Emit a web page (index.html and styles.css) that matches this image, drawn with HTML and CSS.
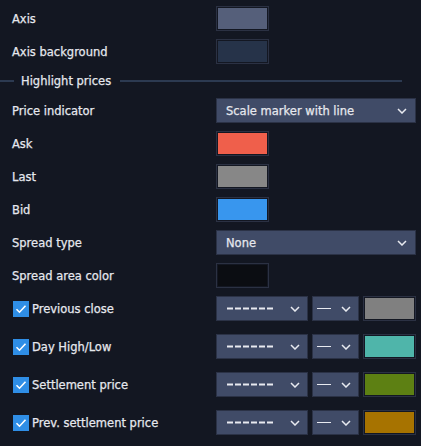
FILE: index.html
```html
<!DOCTYPE html>
<html>
<head>
<meta charset="utf-8">
<link rel="stylesheet" href="styles.css">
</head>
<body>
<div class="panel">
  <div class="row"><span class="label">Axis</span><span class="swatch"><i class="fill c-axis"></i></span></div>
  <div class="row"><span class="label">Axis background</span><span class="swatch"><i class="fill c-axisbg"></i></span></div>
  <div class="section"><span class="line short"></span><span class="section-title">Highlight prices</span><span class="line long"></span></div>
  <div class="row"><span class="label">Price indicator</span>
    <div class="select wide"><span class="select-text">Scale marker with line</span>
      <svg class="chev" width="10" height="6" viewBox="0 0 10 6"><path d="M1 1l4 4 4-4" fill="none" stroke="#e8eaf0" stroke-width="1.5"/></svg></div></div>
  <div class="row"><span class="label">Ask</span><span class="swatch"><i class="fill c-ask"></i></span></div>
  <div class="row"><span class="label">Last</span><span class="swatch"><i class="fill c-last"></i></span></div>
  <div class="row"><span class="label">Bid</span><span class="swatch"><i class="fill c-bid"></i></span></div>
  <div class="row"><span class="label">Spread type</span>
    <div class="select wide"><span class="select-text">None</span>
      <svg class="chev" width="10" height="6" viewBox="0 0 10 6"><path d="M1 1l4 4 4-4" fill="none" stroke="#e8eaf0" stroke-width="1.5"/></svg></div></div>
  <div class="row"><span class="label">Spread area color</span><span class="swatch"><i class="fill c-spread"></i></span></div>

  <div class="row"><span class="label check-label"><span class="checkbox"><svg width="16" height="16" viewBox="0 0 16 16"><path d="M3.5 8.2l3 3 6-6.5" fill="none" stroke="#fff" stroke-width="1.6"/></svg></span>Previous close</span>
    <div class="controls">
      <div class="select dash"><svg width="46" height="3" viewBox="0 0 46 3"><path d="M0 1.5h46" stroke="#e8eaf0" stroke-width="2" stroke-dasharray="6 2"/></svg><svg class="chev" width="10" height="6" viewBox="0 0 10 6"><path d="M1 1l4 4 4-4" fill="none" stroke="#e8eaf0" stroke-width="1.5"/></svg></div>
      <div class="select width"><svg width="14" height="3" viewBox="0 0 14 3"><path d="M0 1.5h14" stroke="#e8eaf0" stroke-width="1"/></svg><svg class="chev" width="10" height="6" viewBox="0 0 10 6"><path d="M1 1l4 4 4-4" fill="none" stroke="#e8eaf0" stroke-width="1.5"/></svg></div>
      <span class="swatch"><i class="fill c-prev"></i></span>
    </div></div>

  <div class="row gap"><span class="label check-label"><span class="checkbox"><svg width="16" height="16" viewBox="0 0 16 16"><path d="M3.5 8.2l3 3 6-6.5" fill="none" stroke="#fff" stroke-width="1.6"/></svg></span>Day High/Low</span>
    <div class="controls">
      <div class="select dash"><svg width="46" height="3" viewBox="0 0 46 3"><path d="M0 1.5h46" stroke="#e8eaf0" stroke-width="2" stroke-dasharray="6 2"/></svg><svg class="chev" width="10" height="6" viewBox="0 0 10 6"><path d="M1 1l4 4 4-4" fill="none" stroke="#e8eaf0" stroke-width="1.5"/></svg></div>
      <div class="select width"><svg width="14" height="3" viewBox="0 0 14 3"><path d="M0 1.5h14" stroke="#e8eaf0" stroke-width="1"/></svg><svg class="chev" width="10" height="6" viewBox="0 0 10 6"><path d="M1 1l4 4 4-4" fill="none" stroke="#e8eaf0" stroke-width="1.5"/></svg></div>
      <span class="swatch"><i class="fill c-day"></i></span>
    </div></div>

  <div class="row gap"><span class="label check-label"><span class="checkbox"><svg width="16" height="16" viewBox="0 0 16 16"><path d="M3.5 8.2l3 3 6-6.5" fill="none" stroke="#fff" stroke-width="1.6"/></svg></span>Settlement price</span>
    <div class="controls">
      <div class="select dash"><svg width="46" height="3" viewBox="0 0 46 3"><path d="M0 1.5h46" stroke="#e8eaf0" stroke-width="2" stroke-dasharray="6 2"/></svg><svg class="chev" width="10" height="6" viewBox="0 0 10 6"><path d="M1 1l4 4 4-4" fill="none" stroke="#e8eaf0" stroke-width="1.5"/></svg></div>
      <div class="select width"><svg width="14" height="3" viewBox="0 0 14 3"><path d="M0 1.5h14" stroke="#e8eaf0" stroke-width="1"/></svg><svg class="chev" width="10" height="6" viewBox="0 0 10 6"><path d="M1 1l4 4 4-4" fill="none" stroke="#e8eaf0" stroke-width="1.5"/></svg></div>
      <span class="swatch"><i class="fill c-settle"></i></span>
    </div></div>

  <div class="row gap"><span class="label check-label"><span class="checkbox"><svg width="16" height="16" viewBox="0 0 16 16"><path d="M3.5 8.2l3 3 6-6.5" fill="none" stroke="#fff" stroke-width="1.6"/></svg></span>Prev. settlement price</span>
    <div class="controls">
      <div class="select dash"><svg width="46" height="3" viewBox="0 0 46 3"><path d="M0 1.5h46" stroke="#e8eaf0" stroke-width="2" stroke-dasharray="6 2"/></svg><svg class="chev" width="10" height="6" viewBox="0 0 10 6"><path d="M1 1l4 4 4-4" fill="none" stroke="#e8eaf0" stroke-width="1.5"/></svg></div>
      <div class="select width"><svg width="14" height="3" viewBox="0 0 14 3"><path d="M0 1.5h14" stroke="#e8eaf0" stroke-width="1"/></svg><svg class="chev" width="10" height="6" viewBox="0 0 10 6"><path d="M1 1l4 4 4-4" fill="none" stroke="#e8eaf0" stroke-width="1.5"/></svg></div>
      <span class="swatch"><i class="fill c-prevsettle"></i></span>
    </div></div>
</div>
</body>
</html>
```
FILE: styles.css
```css
html, body {
  margin: 0;
  padding: 0;
  background: #131722;
  width: 421px;
  height: 446px;
  overflow: hidden;
}
.panel {
  padding-top: 2px;
  font-family: "DejaVu Sans", sans-serif;
  font-weight: normal;
  font-size: 11.5px;
  color: #e6e8ee;
  -webkit-text-stroke: 0.25px #e6e8ee;
}
.row {
  height: 33px;
  display: flex;
  align-items: center;
  padding-left: 12px;
}
.row.gap { margin-top: 5px; }
.label {
  width: 204px;
  flex: none;
  white-space: nowrap;
}
.check-label {
  display: flex;
  align-items: center;
  width: 203px;
  margin-left: 1px;
}
.checkbox {
  width: 16px;
  height: 16px;
  background: #2f8ee6;
  margin-right: 3px;
  display: flex;
  -webkit-text-stroke: 0;
}
.swatch {
  box-sizing: border-box;
  width: 53px;
  height: 25px;
  border: 1px solid #2b3143;
  padding: 1px;
  background: #131722;
  display: flex;
  flex: none;
}
.fill { flex: 1; display: block; }
.c-axis { background: #555f7a; }
.c-axisbg { background: #263349; }
.c-ask { background: #ef5f4b; }
.c-last { background: #878787; }
.c-bid { background: #3896ee; }
.c-spread { background: #0b0d12; }
.c-prev { background: #808080; }
.c-day { background: #4fb5aa; }
.c-settle { background: #5d8013; }
.c-prevsettle { background: #a77300; }
.section {
  height: 26px;
  display: flex;
  align-items: center;
}
.line { height: 2px; background: #2c3a51; }
.line.short { width: 14px; }
.line.long { width: 282px; }
.section-title { padding: 0 10px 0 7px; white-space: nowrap; width: 89px; }
.select {
  box-sizing: border-box;
  height: 25px;
  background: #404b67;
  border: 1px solid #2b3246;
  display: flex;
  align-items: center;
  flex: none;
}
.select.wide {
  width: 200px;
  padding: 0 8px 0 9px;
  justify-content: space-between;
}
.select-text { color: #e6e8ee; }
.controls { display: flex; gap: 4px; }
.select.dash { width: 92px; padding: 0 7px 0 10px; justify-content: space-between; }
.select.width { width: 47px; padding: 0 7px 0 4px; justify-content: space-between; }
.chev { display: block; }
```
